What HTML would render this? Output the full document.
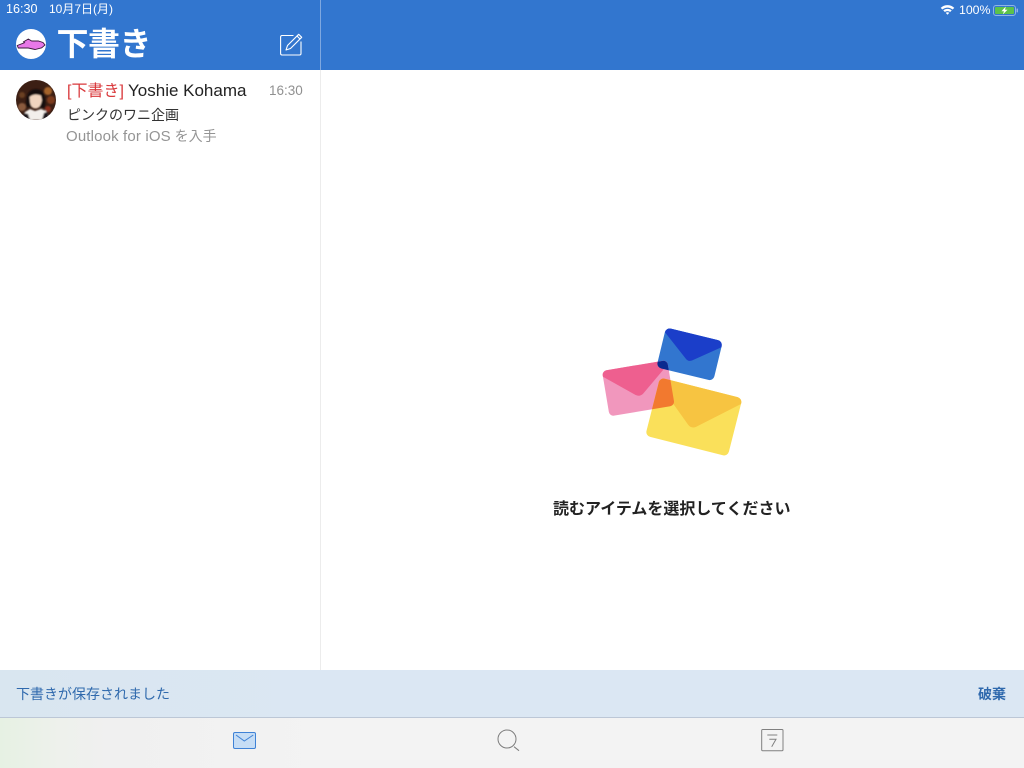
<!DOCTYPE html>
<html lang="ja"><head><meta charset="utf-8"><title>下書き</title>
<style>
html,body{margin:0;padding:0;background:#fff}
body{width:1024px;height:768px;position:relative;overflow:hidden;font-family:"Liberation Sans","Noto Sans CJK JP",sans-serif;color:#222}
.a{position:absolute;white-space:nowrap;line-height:1}
svg{position:absolute;overflow:visible}
</style></head><body>
<div class="a" style="left:0;top:0;width:1024px;height:70px;background:#3276cf"></div>
<div class="a" style="left:320px;top:0;width:1px;height:70px;background:#7fa8e0"></div>
<div class="a" style="left:320px;top:70px;width:1px;height:600px;background:#ececec"></div>
<div class="a" style="left:6px;top:3px;font-size:12.6px;color:#fff">16:30</div>
<div class="a" style="left:49px;top:3px;font-size:12px;color:#fff">10月7日(月)</div>
<svg style="left:940px;top:4px" width="15" height="11" viewBox="0 0 16 12"><path d="M.6 4.2C5 .2 11 .2 15.4 4.2L13.6 6C10.4 3.2 5.6 3.2 2.4 6ZM3.4 7C6 4.8 10 4.8 12.6 7L10.9 8.7C9.3 7.4 6.7 7.4 5.1 8.7ZM6.1 9.7C7.2 8.8 8.8 8.8 9.9 9.7L8 11.7Z" fill="#fff"/></svg>
<div class="a" style="left:959px;top:4px;font-size:12.3px;color:#fff">100%</div>
<svg style="left:993px;top:5px" width="26" height="11" viewBox="0 0 26 11"><rect x=".5" y=".5" width="22" height="10" rx="2.5" fill="none" stroke="#8fb4e6"/><rect x="2" y="2" width="19" height="7" rx="1" fill="#5cc24a"/><rect x="23.5" y="3.5" width="1.5" height="4" rx=".7" fill="#8fb4e6"/><path d="M12.8 1.5 8.5 6.3H11L9.8 9.5 14.5 4.7H12Z" fill="#fff"/></svg>
<svg style="left:16px;top:29px" width="30" height="30" viewBox="0 0 30 30"><circle cx="15" cy="15" r="15" fill="#fff"/><path d="M1.3 16.5 8.5 13.7 7.5 12.8 12.3 10 15.7 12H22.3L27 13.5 29 16 25.7 18.8 19 20.5 12.3 19H2.3Z" fill="#e878e8" stroke="#3d183d" stroke-width=".9"/></svg>
<div class="a" style="left:56.5px;top:28px;font-size:32px;font-weight:700;color:#fff;letter-spacing:-.5px">下書き</div>
<svg style="left:280px;top:33px" width="23" height="23" viewBox="0 0 23 23" fill="none" stroke="#fff" stroke-width="1.1"><path d="M13.5 2.5H2A1.5 1.5 0 0 0 .6 4V20.5A1.5 1.5 0 0 0 2 22H19.5A1.5 1.5 0 0 0 21 20.5V8.5"/><path d="M6 17 7.5 12.5 18.7 1.3 21.7 4.3 10.5 15.5ZM17 3 20 6" stroke-linejoin="round"/></svg>

<svg style="left:16px;top:80px" width="40" height="40" viewBox="0 0 40 40"><defs><clipPath id="av"><circle cx="20" cy="20" r="20"/></clipPath><filter id="bl" x="-20%" y="-20%" width="140%" height="140%"><feGaussianBlur stdDeviation=".8"/></filter></defs><g clip-path="url(#av)"><rect width="40" height="40" fill="#3c1f14"/><g filter="url(#bl)"><circle cx="6" cy="15" r="3" fill="#6a3f22"/><circle cx="32" cy="11" r="4" fill="#a5632a"/><circle cx="35" cy="20" r="4" fill="#7c3a1e"/><circle cx="32" cy="29" r="3" fill="#8a2f1e"/><circle cx="6" cy="27" r="4" fill="#8a5a3c"/><path d="M10 27C9 15 13 9 20 9S31 15 29 28Z" fill="#15100e"/><path d="M13.5 17Q18 13 25 15.5L26 20Q24.5 28.5 19.5 28.5Q15 28.5 14 22Z" fill="#f1d4bf"/><path d="M5 40 9 32 14 29 19 31 25 29 30 31 35 40Z" fill="#f3efeb"/><path d="M6 40 8 33 12 34 14 40ZM26 40 28 33 31 32 34 40Z" fill="#1a181e"/></g></g></svg>
<div class="a" style="left:67px;top:81.5px;font-size:16px;color:#d9393c;line-height:18px;margin-top:1px">[下書き]</div>
<div class="a" style="left:128px;top:82px;font-size:17px;color:#222;line-height:18px">Yoshie Kohama</div>
<div class="a" style="left:269px;top:83px;font-size:13.5px;color:#909090;line-height:15px">16:30</div>
<div class="a" style="left:67px;top:107px;font-size:14px;color:#333;line-height:16px">ピンクのワニ企画</div>
<div class="a" style="left:66px;top:128px;font-size:14px;color:#949494;line-height:16px"><span style="font-size:15px;letter-spacing:.15px">Outlook for iOS</span> を入手</div>

<svg style="left:0;top:0" width="1024" height="768" viewBox="0 0 1024 768">
<defs>
<clipPath id="cp"><rect width="66" height="46" rx="4.5" transform="translate(602,371) rotate(-9.5)"/></clipPath>
<clipPath id="lb"><rect width="58.5" height="41" rx="5"/></clipPath>
<clipPath id="lp"><rect width="66" height="46" rx="4.5"/></clipPath>
<clipPath id="ly"><rect width="85" height="60" rx="5"/></clipPath>
</defs>
<g transform="translate(666,327.5) rotate(13.6)"><rect width="58.5" height="41" rx="5" fill="#3276cf"/><path d="M-1 -1H60V5L33 26Q30 28 27 26L-1 4Z" fill="#1b3ec9" clip-path="url(#lb)"/></g>
<g transform="translate(602,371) rotate(-9.5)"><rect width="66" height="46" rx="4.5" fill="#f197bd"/><path d="M-1 -1H67V3.5L37 29Q33 32 29 29L-1 5Z" fill="#ee5f8f" clip-path="url(#lp)"/></g>
<g transform="translate(660,377.5) rotate(14.2)"><rect width="85" height="60" rx="5" fill="#fae05a"/><path d="M-1 -1H86V5L47 39Q43 42 39 39L-1 5Z" fill="#f7c441" clip-path="url(#ly)"/></g>
<g clip-path="url(#cp)"><rect width="85" height="60" rx="5" fill="#f2792f" transform="translate(660,377.5) rotate(14.2)"/></g>
<g clip-path="url(#cp)"><rect width="58.5" height="41" rx="5" fill="#0a2a8f" transform="translate(666,327.5) rotate(13.6)"/></g>
</svg>
<div class="a" style="left:553px;top:499.5px;font-size:16px;font-weight:700;color:#222;line-height:19px">読むアイテムを選択してください</div>

<div class="a" style="left:0;top:670px;width:1024px;height:47px;background:linear-gradient(90deg,#d9e6f0 0,#dbe7f3 300px)"></div>
<div class="a" style="left:16px;top:686px;font-size:14px;color:#2f69ad;line-height:16px">下書きが保存されました</div>
<div class="a" style="left:978px;top:686px;font-size:14px;font-weight:700;color:#2f69ad;line-height:16px">破棄</div>
<div class="a" style="left:0;top:717px;width:1024px;height:1px;background:#bcc7d6"></div>
<div class="a" style="left:0;top:718px;width:1024px;height:50px;background:linear-gradient(90deg,#e6f1e3 0,#eef1ec 60px,#f0f0f0 110px,#f3f3f3 320px)"></div>
<svg style="left:233px;top:732px" width="23" height="17" viewBox="0 0 23 17"><rect x=".5" y=".5" width="22" height="16" rx="1.5" fill="#c6ddf5" stroke="#3f82d6"/><path d="M3 3 11.3 9 20.3 3" fill="none" stroke="#3f82d6"/></svg>
<svg style="left:497px;top:729px" width="24" height="23" viewBox="0 0 24 23" fill="none" stroke="#7d7d7d" stroke-width="1"><circle cx="10" cy="10" r="9"/><path d="M17 17.7 22 21.7"/></svg>
<svg style="left:761px;top:729px" width="23" height="23" viewBox="0 0 23 23" fill="none" stroke="#808080" stroke-width="1"><rect x=".7" y=".5" width="21.3" height="21.3" rx="1"/><path d="M6.3 6H16.3"/><path d="M8.3 10.3H15L10.7 17.7"/></svg>
</body></html>
